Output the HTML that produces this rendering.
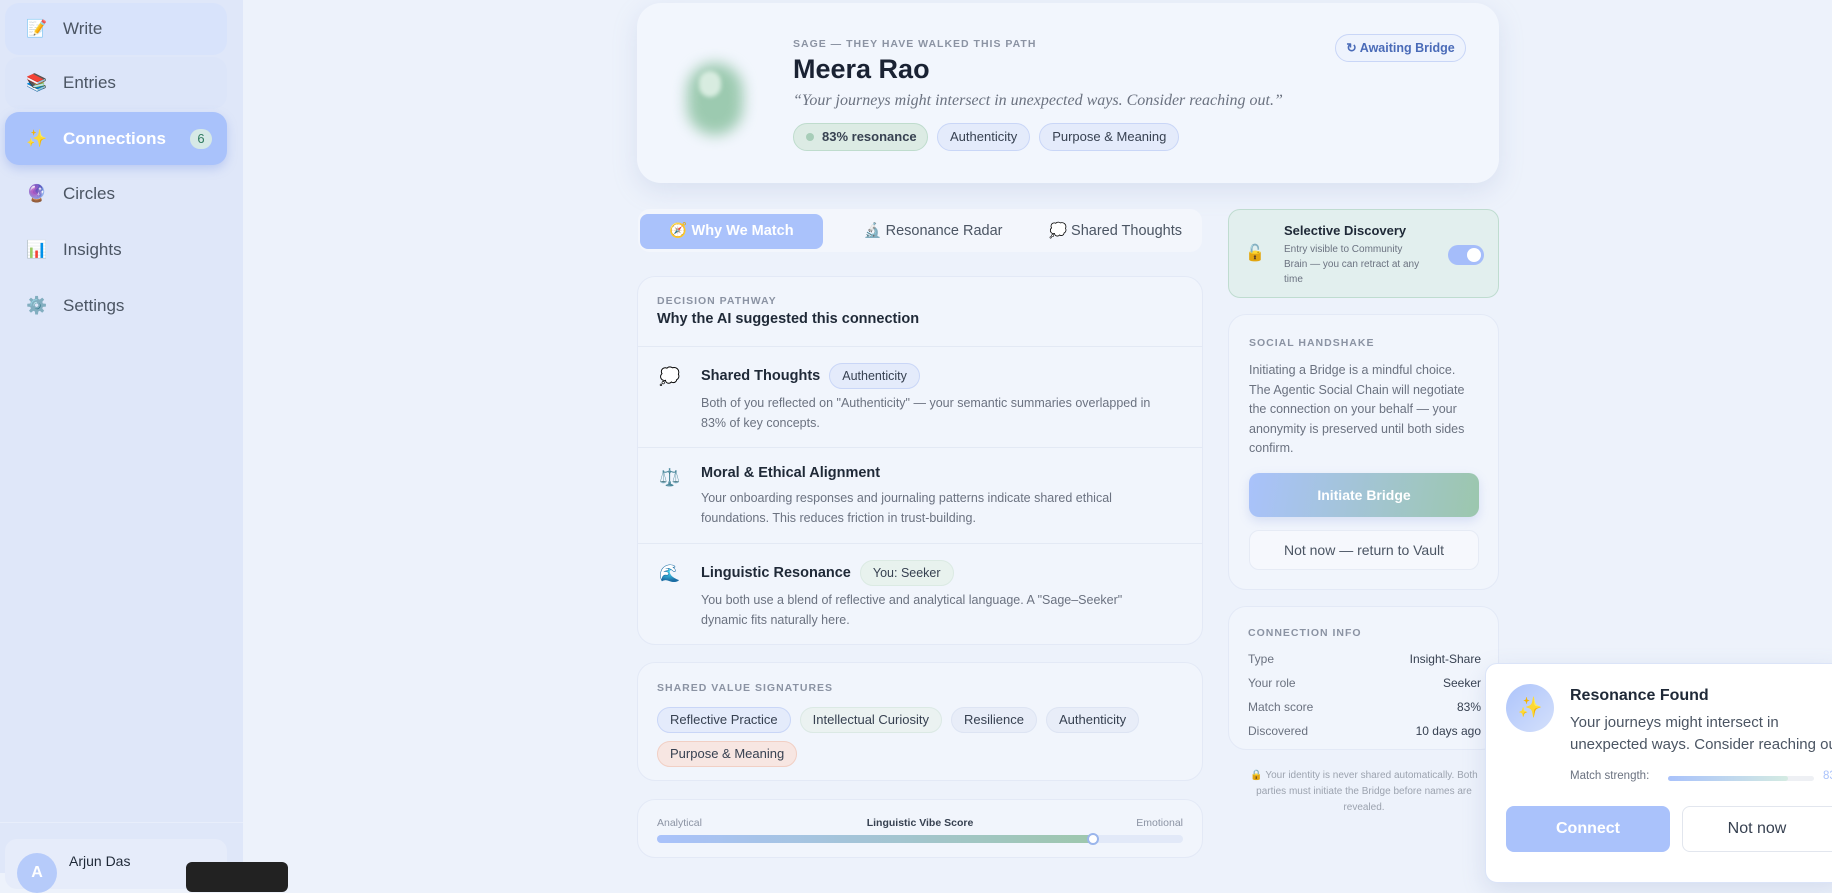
<!DOCTYPE html>
<html><head><meta charset="utf-8"><style>
*{box-sizing:border-box;margin:0;padding:0}
body{width:1832px;height:873px;overflow:hidden;background:#edf2fb;font-family:"Liberation Sans",sans-serif;color:#1f2937;position:relative}
.abs{position:absolute}
.side{left:0;top:0;width:243px;height:873px;background:#dfe7f9}
.nav{position:absolute;left:5px;width:222px;height:52px;border-radius:14px;display:flex;align-items:center;font-size:17px;color:#4b5563}
.nav .ic{width:24px;margin-left:20px;margin-right:14px;font-size:17px;text-align:center}
.card{position:absolute;background:#f1f5fc;border:1px solid #e3e9f6;border-radius:18px}
.lbl{font-size:10.5px;font-weight:bold;letter-spacing:1px;color:#8b93a3}
.chip{display:inline-block;height:28px;line-height:26px;border-radius:14px;padding:0 12px;font-size:13px;border:1px solid #c9d6f7;background:#e4ebfb;color:#374151;margin-right:9px}
.p{font-size:12.5px;color:#6b7280;line-height:20px}
.row{position:absolute;left:0;width:100%;border-top:1px solid #e3e9f4}
</style></head><body>
<div class="abs side">
  <div class="nav" style="top:3px;background:#d8e3fb">
    <span class="ic">📝</span>Write</div>
  <div class="nav" style="top:57px;background:#dce5f9">
    <span class="ic">📚</span>Entries</div>
  <div class="nav" style="top:112px;height:53px;background:#a9c2fb;color:#fff;font-weight:bold;box-shadow:0 4px 10px rgba(120,150,230,.35)">
    <span class="ic">✨</span>Connections<span style="margin-left:auto;margin-right:15px;width:22px;height:20px;border-radius:10px;background:#d6e9e6;color:#2f7a5f;font-size:13px;font-weight:normal;text-align:center;line-height:20px">6</span></div>
  <div class="nav" style="top:168px"><span class="ic">🔮</span>Circles</div>
  <div class="nav" style="top:224px"><span class="ic">📊</span>Insights</div>
  <div class="nav" style="top:280px"><span class="ic">⚙️</span>Settings</div>
  <div class="abs" style="left:0;top:822px;width:243px;border-top:1px solid #e8eefb"></div>
  <div class="abs" style="left:5px;top:839px;width:222px;height:50px;border-radius:12px;background:#e6ecfa"></div>
  <div class="abs" style="left:17px;top:853px;width:40px;height:40px;border-radius:20px;background:#b6cbfa;color:#fff;text-align:center;line-height:40px;font-weight:bold">A</div>
  <div class="abs" style="left:69px;top:853px;font-size:14px;color:#1f2937">Arjun Das</div>
</div>
<div class="abs" style="left:186px;top:862px;width:102px;height:30px;border-radius:6px;background:#222"></div>

<!-- hero -->
<div class="abs" style="left:637px;top:3px;width:862px;height:180px;background:#f2f6fd;border-radius:24px;box-shadow:0 8px 24px rgba(160,175,215,.25)">
  <div class="abs" style="left:50px;top:60px;width:56px;height:72px;border-radius:28px;background:#9ccab0;filter:blur(7px)"></div>
  <div class="abs" style="left:62px;top:68px;width:22px;height:26px;border-radius:12px;background:#d8ece0;filter:blur(2px)"></div>
  <div class="abs lbl" style="left:156px;top:35px;font-size:10.5px">SAGE — THEY HAVE WALKED THIS PATH</div>
  <div class="abs" style="left:156px;top:51px;font-size:27px;font-weight:bold;color:#1a2233">Meera Rao</div>
  <div class="abs" style="left:156px;top:89px;font-family:'Liberation Serif',serif;font-style:italic;font-size:16px;color:#6b7280">“Your journeys might intersect in unexpected ways. Consider reaching out.”</div>
  <div class="abs" style="left:156px;top:120px;white-space:nowrap">
    <span class="chip" style="background:#dcebe4;border-color:#bfdccd;font-weight:bold;width:135px;padding-left:12px"><span style="display:inline-block;width:8px;height:8px;border-radius:4px;background:#a7cdb8;margin-right:8px"></span>83% resonance</span><span class="chip">Authenticity</span><span class="chip">Purpose &amp; Meaning</span>
  </div>
  <div class="abs" style="left:698px;top:31px;width:131px;height:28px;border-radius:14px;border:1px solid #c9d6f7;background:#eef3fd;color:#4a6bb8;font-size:12.5px;line-height:26px;text-align:center;font-weight:bold">↻ Awaiting Bridge</div>
</div>

<!-- tabs -->
<div class="abs" style="left:638px;top:209px;width:564px;height:43px;border-radius:12px;background:#f3f6fc">
  <div class="abs" style="left:2px;top:5px;width:183px;height:35px;border-radius:8px;background:#aac2fb;color:#fff;font-weight:bold;font-size:14.5px;text-align:center;line-height:35px">🧭 Why We Match</div>
  <div class="abs" style="left:205px;top:5px;width:180px;height:35px;font-size:14.5px;line-height:35px;text-align:center;color:#4b5563">🔬 Resonance Radar</div>
  <div class="abs" style="left:390px;top:5px;width:175px;height:35px;font-size:14.5px;line-height:35px;text-align:center;color:#4b5563">💭 Shared Thoughts</div>
</div>

<!-- decision -->
<div class="card" style="left:637px;top:276px;width:566px;height:369px">
  <div class="abs lbl" style="left:19px;top:18px">DECISION PATHWAY</div>
  <div class="abs" style="left:19px;top:34px;font-size:14.5px;font-weight:bold;color:#1f2937">Why the AI suggested this connection</div>
  <div class="row" style="top:69px;height:101px">
    <div class="abs" style="left:21px;top:20px;font-size:17px">💭</div>
    <div class="abs" style="left:63px;top:16px;font-size:14.5px;font-weight:bold;white-space:nowrap">Shared Thoughts <span class="chip" style="height:26px;line-height:24px;font-weight:normal;font-size:12.5px;margin-left:5px">Authenticity</span></div>
    <div class="abs p" style="left:63px;top:46px;width:480px">Both of you reflected on "Authenticity" — your semantic summaries overlapped in<br>83% of key concepts.</div>
  </div>
  <div class="row" style="top:170px;height:96px">
    <div class="abs" style="left:21px;top:20px;font-size:17px">⚖️</div>
    <div class="abs" style="left:63px;top:17px;font-size:14.5px;font-weight:bold">Moral &amp; Ethical Alignment</div>
    <div class="abs p" style="left:63px;top:40px;width:440px">Your onboarding responses and journaling patterns indicate shared ethical foundations. This reduces friction in trust-building.</div>
  </div>
  <div class="row" style="top:266px;height:100px">
    <div class="abs" style="left:21px;top:20px;font-size:17px">🌊</div>
    <div class="abs" style="left:63px;top:16px;font-size:14.5px;font-weight:bold;white-space:nowrap">Linguistic Resonance <span class="chip" style="height:26px;line-height:24px;font-weight:normal;font-size:12.5px;margin-left:5px;background:#e8f2ee;border-color:#dbeae3">You: Seeker</span></div>
    <div class="abs p" style="left:63px;top:46px;width:480px;white-space:nowrap">You both use a blend of reflective and analytical language. A "Sage–Seeker"<br>dynamic fits naturally here.</div>
  </div>
</div>

<!-- values -->
<div class="card" style="left:637px;top:662px;width:566px;height:119px">
  <div class="abs lbl" style="left:19px;top:19px">SHARED VALUE SIGNATURES</div>
  <div class="abs" style="left:19px;top:40px;width:540px;line-height:34px">
    <span class="chip" style="height:26px;line-height:24px">Reflective Practice</span><span class="chip" style="height:26px;line-height:24px;background:#ebf2f1;border-color:#dbe9e4">Intellectual Curiosity</span><span class="chip" style="height:26px;line-height:24px;background:#e8edf8;border-color:#dde4f3">Resilience</span><span class="chip" style="height:26px;line-height:24px;background:#e8edf8;border-color:#dde4f3">Authenticity</span><br><span class="chip" style="height:26px;line-height:24px;background:#f7e6e2;border-color:#f1cfc4">Purpose &amp; Meaning</span>
  </div>
</div>

<!-- vibe -->
<div class="card" style="left:637px;top:799px;width:566px;height:59px">
  <div class="abs" style="left:19px;top:17px;font-size:10.5px;color:#8b93a3">Analytical</div>
  <div class="abs" style="left:0;width:100%;top:17px;font-size:10.5px;color:#374151;text-align:center;font-weight:bold">Linguistic Vibe Score</div>
  <div class="abs" style="right:19px;top:17px;font-size:10.5px;color:#8b93a3">Emotional</div>
  <div class="abs" style="left:19px;top:35px;width:526px;height:8px;border-radius:4px;background:#e2e9f8"></div>
  <div class="abs" style="left:19px;top:35px;width:436px;height:8px;border-radius:4px;background:linear-gradient(90deg,#a9c2fb,#9ec7ad)"></div>
  <div class="abs" style="left:449px;top:33px;width:12px;height:12px;border-radius:6px;background:#fff;border:2px solid #9bb6ec"></div>
</div>

<!-- selective -->
<div class="abs" style="left:1228px;top:209px;width:271px;height:89px;border-radius:12px;background:#e2efee;border:1px solid #bfdcd0">
  <div class="abs" style="left:16px;top:33px;font-size:16px">🔓</div>
  <div class="abs" style="left:55px;top:13px;font-size:13px;font-weight:bold;color:#1f2937">Selective Discovery</div>
  <div class="abs" style="left:55px;top:32px;font-size:10px;line-height:15px;color:#6b7280;white-space:nowrap">Entry visible to Community<br>Brain — you can retract at any<br>time</div>
  <div class="abs" style="left:219px;top:35px;width:36px;height:20px;border-radius:10px;background:#a5bdfa"><div class="abs" style="right:3px;top:3px;width:14px;height:14px;border-radius:7px;background:#fff"></div></div>
</div>

<!-- handshake -->
<div class="card" style="left:1228px;top:314px;width:271px;height:276px">
  <div class="abs lbl" style="left:20px;top:22px">SOCIAL HANDSHAKE</div>
  <div class="abs" style="left:20px;top:46px;width:225px;font-size:12.5px;line-height:19.5px;color:#6b7280">Initiating a Bridge is a mindful choice. The Agentic Social Chain will negotiate the connection on your behalf — your anonymity is preserved until both sides confirm.</div>
  <div class="abs" style="left:20px;top:158px;width:230px;height:44px;border-radius:10px;background:linear-gradient(100deg,#a9c2fb,#9cc7ad);color:#fff;font-weight:bold;font-size:14px;text-align:center;line-height:44px;box-shadow:0 4px 10px rgba(150,170,230,.3)">Initiate Bridge</div>
  <div class="abs" style="left:20px;top:215px;width:230px;height:40px;border-radius:10px;background:#f6f8fd;border:1px solid #e6ebf5;color:#4b5563;font-size:14px;text-align:center;line-height:38px">Not now — return to Vault</div>
</div>

<!-- info -->
<div class="card" style="left:1228px;top:606px;width:271px;height:144px">
  <div class="abs lbl" style="left:19px;top:20px">CONNECTION INFO</div>
  <div class="abs" style="left:19px;top:40px;width:233px;font-size:12px;line-height:24px;color:#6b7280">
    <div style="display:flex;justify-content:space-between"><span>Type</span><span style="color:#374151">Insight-Share</span></div>
    <div style="display:flex;justify-content:space-between"><span>Your role</span><span style="color:#374151">Seeker</span></div>
    <div style="display:flex;justify-content:space-between"><span>Match score</span><span style="color:#374151">83%</span></div>
    <div style="display:flex;justify-content:space-between"><span>Discovered</span><span style="color:#374151">10 days ago</span></div>
  </div>
</div>
<div class="abs" style="left:1243px;top:768px;width:242px;font-size:10px;line-height:16px;color:#9ca3af;text-align:center">🔒 Your identity is never shared automatically. Both parties must initiate the Bridge before names are revealed.</div>

<!-- toast -->
<div class="abs" style="left:1485px;top:663px;width:360px;height:220px;background:#fff;border:1px solid #dbe4f8;border-radius:12px;box-shadow:0 8px 24px rgba(120,140,190,.2)">
  <div class="abs" style="left:20px;top:20px;width:48px;height:48px;border-radius:24px;background:linear-gradient(135deg,#adc4fb,#d4e0fb);text-align:center;line-height:48px;font-size:20px">✨</div>
  <div class="abs" style="left:84px;top:23px;font-size:16px;font-weight:bold;color:#1f2937">Resonance Found</div>
  <div class="abs" style="left:84px;top:48px;width:270px;font-size:15px;line-height:22px;color:#4b5563;white-space:nowrap">Your journeys might intersect in<br>unexpected ways. Consider reaching out.</div>
  <div class="abs" style="left:84px;top:106px;font-size:11.5px;color:#6b7280">Match strength:</div>
  <div class="abs" style="left:182px;top:112px;width:146px;height:5px;border-radius:3px;background:#eef0f4"></div>
  <div class="abs" style="left:182px;top:112px;width:120px;height:5px;border-radius:3px;background:linear-gradient(90deg,#a9c2fb,#d4ebe2)"></div>
  <div class="abs" style="left:337px;top:106px;font-size:11.5px;color:#a9c2fb">83%</div>
  <div class="abs" style="left:20px;top:142px;width:164px;height:46px;border-radius:8px;background:#aac2fb;color:#fff;font-size:16px;font-weight:bold;text-align:center;line-height:46px">Connect</div>
  <div class="abs" style="left:196px;top:142px;width:160px;height:46px;border-radius:8px;border:1px solid #e2e6ee;color:#374151;font-size:16px;text-align:center;line-height:44px;padding-right:10px">Not now</div>
</div>
</body></html>
